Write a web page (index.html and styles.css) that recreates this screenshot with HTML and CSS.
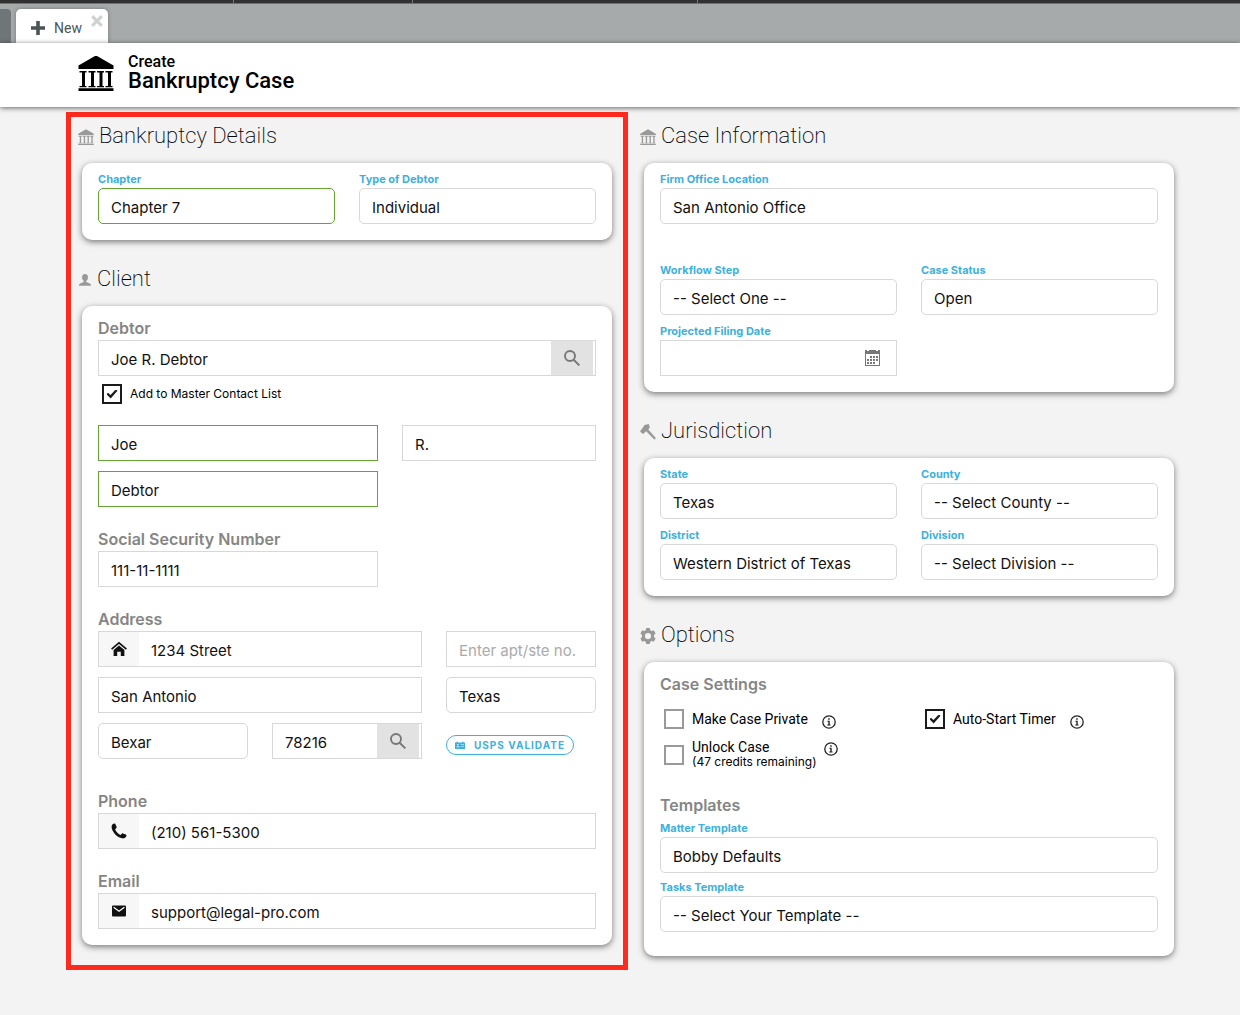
FILE: index.html
```
<!DOCTYPE html>
<html lang="en">
<head>
<meta charset="utf-8">
<meta name="viewport" content="width=device-width, initial-scale=1">
<title>Create Bankruptcy Case</title>
<link rel="stylesheet" href="styles.css">
</head>
<body>
<svg class="sprite" aria-hidden="true">
  <symbol id="i-bank" viewBox="0 0 36 36">
    <path d="M.500 10.500 17 1h2l16.500 9.500V14H.5zM.5 33.200h35V36H.5zM1.500 16h7v1.600H7V31h1.500v1.200h-7V31H4V17.600H1.500zM10.500 16h7v1.600H16V31h1.500v1.200h-7V31H13V17.600h-2.500zM19 16h7v1.600h-1.500V31H26v1.200h-7V31h2.500V17.600H19zM27.500 16h7v1.600H33V31h1.500v1.200h-7V31H30V17.600h-2.500z"/>
  </symbol>
  <symbol id="i-user" viewBox="0 0 16 16">
    <path d="M8 1c2.300 0 3.400 1.600 3.400 3.800 0 1.800-.8 3.400-1.900 4.200v1.300c0 .5 5 1.100 5.500 3.700v.5H1V14c.5-2.600 5.500-3.200 5.500-3.700V9C5.400 8.200 4.600 6.600 4.600 4.800 4.600 2.600 5.700 1 8 1z"/>
  </symbol>
  <symbol id="i-gavel" viewBox="0 0 16 16">
    <path d="M0 7.400 4.600.900 8.800 0l1 3.600-1.500 1.800L15.800 14l-1.300 1.800-8.300-8.600L3 10z"/>
  </symbol>
  <symbol id="i-gear" viewBox="0 0 16 16">
    <path fill-rule="evenodd" d="M6.200 0h3.600l.5 2.200 1.300.8 2.200-.7 1.800 3.200L14 7.100v1.800l1.600 1.600-1.800 3.200-2.200-.7-1.300.8-.5 2.200H6.200l-.5-2.200-1.300-.8-2.200.7-1.800-3.200L2 8.900V7.100L.4 5.500l1.800-3.200 2.200.7 1.300-.8zM8 4.900a3.100 3.100 0 1 0 0 6.200 3.100 3.100 0 0 0 0-6.200z"/>
  </symbol>
  <symbol id="i-search" viewBox="0 0 16 16">
    <path fill="none" stroke="currentColor" stroke-width="1.900" d="M6 1a5 5 0 1 0 0 10A5 5 0 0 0 6 1zm3.600 8.700 5.800 5.700"/>
  </symbol>
  <symbol id="i-home" viewBox="0 0 16 16">
    <path d="M8 4.600 13.400 9v6H9.800v-4.200H6.200V15H2.600V9z"/>
    <path fill="none" stroke="currentColor" stroke-width="1.700" d="M.600 8.100 8 1.900l7.400 6.200"/>
  </symbol>
  <symbol id="i-phone" viewBox="0 0 16 16">
    <path d="M.600 3.200C1 1.600 2.300.5 3.600.6c.5 0 .8.300 1 .8l1 2.500c.2.500 0 .9-.4 1.300L4.100 6.300c.9 2.400 2.900 4.500 5.400 5.700l1.300-1.300c.3-.4.8-.5 1.200-.3l2.800 1.100c.5.200.7.500.7 1-.1 1.500-1.500 2.800-3.200 2.900C6.500 15.300.2 8.300.600 3.200z"/>
  </symbol>
  <symbol id="i-mail" viewBox="0 0 16 16">
    <path d="M2.300 2.500h11.400c.8 0 1.300.5 1.300 1.300v8.400c0 .8-.5 1.300-1.300 1.300H2.300c-.8 0-1.300-.5-1.300-1.300V3.800c0-.8.500-1.300 1.300-1.300z"/>
    <path fill="none" stroke="#fff" stroke-width="1.300" d="M2.600 4.300 8 8.200l5.400-3.900"/>
  </symbol>
  <symbol id="i-info" viewBox="0 0 14 14">
    <circle cx="7" cy="7" r="6.200" fill="none" stroke="currentColor" stroke-width="1.300"/>
    <path d="M6.200 3.200h1.500v1.500H6.200zM5.400 5.800h2.300v3.700h.9v1H5.300v-1h1V6.800h-.9z"/>
  </symbol>
  <symbol id="i-calendar" viewBox="0 0 15 16">
    <path fill-rule="evenodd" d="M0 0h2v1h2V0h7v1h2V0h2v16H0zM1 4v11h13V4z"/>
    <path d="M5 6h2v2H5zM8 6h2v2H8zM11 6h2v2h-2zM2 9h2v2H2zM5 9h2v2H5zM8 9h2v2H8zM11 9h2v2h-2zM2 12h2v2H2zM5 12h2v2H5zM8 12h2v2H8z"/>
  </symbol>
  <symbol id="i-card" viewBox="0 0 10 8">
    <path fill-rule="evenodd" d="M0 1.500h1.500V.8H3v.7h4V.8h1.500v.7H10V8H0zM2.200 3v1.300h1.300V3zM1.500 5.400v.9h3.200v-.9zM6 3.400v.6h3v-.6zM6 5.200v.6h3v-.6z"/>
  </symbol>
  <symbol id="i-plus" viewBox="0 0 14 14">
    <path d="M5.200 0h3.600v5.200H14v3.600H8.800V14H5.200V8.800H0V5.200h5.200z"/>
  </symbol>
  <symbol id="i-close" viewBox="0 0 12 12">
    <path fill="none" stroke="currentColor" stroke-width="3.200" d="m1.200 1.200 9.600 9.600m0-9.600-9.600 9.600"/>
  </symbol>
</svg>

<div class="window-bar"><span></span><span></span><span></span></div>

<nav class="tabs" aria-label="Open tabs">
  <div class="tab-prev"></div>
  <div class="tab">
    <a class="tab-link" href="#new"><svg class="icon-14"><use href="#i-plus"/></svg>New</a>
    <button class="tab-close" type="button" aria-label="Close tab"><svg class="icon-12"><use href="#i-close"/></svg></button>
  </div>
</nav>

<header class="page-head">
  <svg class="icon-36"><use href="#i-bank"/></svg>
  <h1><span class="head-small">Create</span> <span class="head-big">Bankruptcy Case</span></h1>
</header>

<main>
<form class="columns">
  <div class="column highlighted">
    <section>
      <h2><svg class="icon-16"><use href="#i-bank"/></svg>Bankruptcy Details</h2>
      <div class="card grid-2">
        <div class="field">
          <label for="chapter">Chapter</label>
          <select class="control valid" id="chapter"><option>Chapter 7</option></select>
        </div>
        <div class="field">
          <label for="debtor-type">Type of Debtor</label>
          <select class="control" id="debtor-type"><option>Individual</option></select>
        </div>
      </div>
    </section>

    <section>
      <h2><svg class="icon-14"><use href="#i-user"/></svg>Client</h2>
      <div class="card client">
        <div class="group">
          <label class="title" for="debtor">Debtor</label>
          <div class="control combo">
            <input id="debtor" type="text" value="Joe R. Debtor">
            <button class="lookup" type="button" aria-label="Search contacts"><svg class="icon-16"><use href="#i-search"/></svg></button>
          </div>
          <label class="check small"><input type="checkbox" checked>Add to Master Contact List</label>
        </div>
        <div class="group names">
          <input class="control valid" type="text" aria-label="First name" value="Joe">
          <input class="control" type="text" aria-label="Middle name" value="R.">
          <input class="control valid" type="text" aria-label="Last name" value="Debtor">
        </div>
        <div class="group">
          <label class="title" for="ssn">Social Security Number</label>
          <div class="names"><input class="control" id="ssn" type="text" value="111-11-1111"></div>
        </div>
        <div class="group">
          <label class="title" for="street">Address</label>
          <div class="address">
            <div class="control combo wide">
              <span class="addon"><svg class="icon-16"><use href="#i-home"/></svg></span>
              <input id="street" type="text" value="1234 Street">
            </div>
            <input class="control" type="text" aria-label="Apartment or suite" placeholder="Enter apt/ste no.">
            <input class="control wide" type="text" aria-label="City" value="San Antonio">
            <select class="control" aria-label="State"><option>Texas</option></select>
            <select class="control" aria-label="County"><option>Bexar</option></select>
            <div class="control combo">
              <input type="text" aria-label="ZIP code" value="78216">
              <button class="lookup" type="button" aria-label="Look up ZIP code"><svg class="icon-16"><use href="#i-search"/></svg></button>
            </div>
            <button class="usps" type="button"><svg class="icon-10"><use href="#i-card"/></svg>USPS VALIDATE</button>
          </div>
        </div>
        <div class="group phone">
          <label class="title" for="phone">Phone</label>
          <div class="control combo">
            <span class="addon"><svg class="icon-16"><use href="#i-phone"/></svg></span>
            <input id="phone" type="tel" value="(210) 561-5300">
          </div>
        </div>
        <div class="group">
          <label class="title" for="email">Email</label>
          <div class="control combo">
            <span class="addon"><svg class="icon-16"><use href="#i-mail"/></svg></span>
            <input id="email" type="email" value="support@legal-pro.com">
          </div>
        </div>
      </div>
    </section>
  </div>

  <div class="column">
    <section>
      <h2><svg class="icon-16"><use href="#i-bank"/></svg>Case Information</h2>
      <div class="card grid-2">
        <div class="field full office">
          <label for="office">Firm Office Location</label>
          <select class="control" id="office"><option>San Antonio Office</option></select>
        </div>
        <div class="field">
          <label for="workflow">Workflow Step</label>
          <select class="control" id="workflow"><option>-- Select One --</option></select>
        </div>
        <div class="field">
          <label for="status">Case Status</label>
          <select class="control" id="status"><option>Open</option></select>
        </div>
        <div class="field">
          <label for="filing-date">Projected Filing Date</label>
          <div class="control combo date">
            <input id="filing-date" type="text">
            <button class="calendar" type="button" aria-label="Pick a date"><svg class="icon-calendar"><use href="#i-calendar"/></svg></button>
          </div>
        </div>
      </div>
    </section>

    <section>
      <h2><svg class="icon-16"><use href="#i-gavel"/></svg>Jurisdiction</h2>
      <div class="card grid-2">
        <div class="field">
          <label for="state">State</label>
          <select class="control" id="state"><option>Texas</option></select>
        </div>
        <div class="field">
          <label for="county">County</label>
          <select class="control" id="county"><option>-- Select County --</option></select>
        </div>
        <div class="field">
          <label for="district">District</label>
          <select class="control" id="district"><option>Western District of Texas</option></select>
        </div>
        <div class="field">
          <label for="division">Division</label>
          <select class="control" id="division"><option>-- Select Division --</option></select>
        </div>
      </div>
    </section>

    <section>
      <h2><svg class="icon-16"><use href="#i-gear"/></svg>Options</h2>
      <div class="card options">
        <h3 class="title">Case Settings</h3>
        <div class="settings">
          <div class="setting">
            <label class="check"><input type="checkbox">Make Case Private</label>
            <svg class="icon-14 info"><use href="#i-info"/></svg>
          </div>
          <div class="setting">
            <label class="check"><input type="checkbox" checked>Auto-Start Timer</label>
            <svg class="icon-14 info"><use href="#i-info"/></svg>
          </div>
          <div class="setting two-line">
            <label class="check"><input type="checkbox"><span>Unlock Case<small>(47 credits remaining)</small></span></label>
            <svg class="icon-14 info"><use href="#i-info"/></svg>
          </div>
        </div>
        <h3 class="title">Templates</h3>
        <div class="templates">
          <div class="field">
            <label for="matter">Matter Template</label>
            <select class="control" id="matter"><option>Bobby Defaults</option></select>
          </div>
          <div class="field">
            <label for="tasks">Tasks Template</label>
            <select class="control" id="tasks"><option>-- Select Your Template --</option></select>
          </div>
        </div>
      </div>
    </section>
  </div>
</form>
</main>
</body>
</html>
```
FILE: styles.css
```
* { box-sizing: border-box; }

body {
  margin: 0;
  min-height: 100vh;
  background: #f3f3f3;
  color: #000;
  font: 16px/20px Roboto, "Liberation Sans", sans-serif;
}

h1, h2, h3 { margin: 0; font-weight: inherit; }
button { padding: 0; border: 0; background: none; font: inherit; cursor: pointer; }
svg { flex: none; fill: currentColor; }
.sprite { position: absolute; width: 0; height: 0; }

.icon-10 { width: 10px; height: 8px; }
.icon-12 { width: 12px; height: 12px; }
.icon-14 { width: 14px; height: 14px; }
.icon-16 { width: 16px; height: 16px; }
.icon-36 { width: 36px; height: 36px; }
.icon-calendar { width: 15px; height: 16px; }

/* Window and tab bars */
.window-bar {
  display: grid;
  grid-template-columns: 234px 179px 285px;
  height: 4px;
  background: #303030;
  border-bottom: 1px solid #6f7171;
}
.window-bar span { border-right: 1px solid #777; }

.tabs {
  display: flex;
  align-items: flex-end;
  gap: 5px;
  height: 39px;
  background: #a6aaaa;
}
.tab-prev { width: 11px; height: 34px; border-radius: 0 4px 0 0; background: #6f7677; }
.tab {
  display: flex;
  justify-content: space-between;
  width: 92px;
  height: 34px;
  padding: 6px 5px 0 15px;
  border-radius: 5px 5px 0 0;
  background: #fff;
  box-shadow: 0 0 4px rgba(0, 0, 0, .3);
}
.tab-link {
  display: flex;
  align-items: center;
  gap: 9px;
  height: 26px;
  color: #4b5557;
  font-size: 14px;
  text-decoration: none;
}
.tab-close { display: flex; height: 12px; color: #d0d2d2; }

.page-head {
  position: relative;
  display: flex;
  align-items: center;
  gap: 14px;
  height: 64px;
  padding: 0 78px 4px;
  background: #fff;
  box-shadow: 0 1px 5px rgba(0, 0, 0, .6);
}
.page-head h1 { display: flex; flex-direction: column; font-weight: 500; }
.head-small { font-size: 16px; line-height: 16px; }
.head-big { font-size: 22px; line-height: 22px; }

/* Two form columns */
main { padding: 5px 50px 45px 66px; }
.columns {
  display: grid;
  grid-template-columns: minmax(0, 1fr) minmax(0, 1fr);
  align-items: start;
}
.column { padding: 0 16px; }
.highlighted { padding: 0 11px 20px; border: 5px solid #ff2a1e; }

h2 {
  display: flex;
  align-items: center;
  gap: 5px;
  margin: 23px 0 11px -4px;
  font-size: 22px;
  line-height: 32px;
  font-weight: 200;
}
section:first-child h2 { margin-top: 8px; }
.highlighted section:first-child h2 { margin-top: 3px; }
h2 svg { margin-top: 2px; color: #999; }

.card {
  padding: 8px 16px 16px;
  border-radius: 10px;
  background: #fff;
  box-shadow: 0 2px 6px rgba(0, 0, 0, .5);
}
.grid-2 { display: grid; grid-template-columns: minmax(0, 1fr) minmax(0, 1fr); gap: 8px 24px; }
.full { grid-column: 1 / -1; }
.office { margin-bottom: 30px; }

.field label {
  display: block;
  color: #3db1de;
  font: 700 11px/17px Inter, "Liberation Sans", sans-serif;
}
.title {
  display: block;
  color: #858585;
  font: 600 16px/24px Inter, "Liberation Sans", sans-serif;
}

/* Inputs */
.control {
  display: block;
  width: 100%;
  height: 36px;
  margin: 0;
  padding: 3px 12px 0;
  appearance: none;
  border: 1px solid #d8d8d8;
  border-radius: 0;
  background: #fff;
  color: #111;
  font: 15px/20px Inter, "Liberation Sans", sans-serif;
}
select.control { border-radius: 5px; }
.control.valid { border-color: #63a62f; }
.control::placeholder { color: #aaa; opacity: 1; }

.combo { display: flex; padding: 0; }
.combo input {
  flex: 1;
  min-width: 0;
  padding: 3px 12px 0;
  border: 0;
  background: none;
  color: inherit;
  font: inherit;
}
.addon, .lookup { display: flex; align-items: center; justify-content: center; }
.addon { width: 40px; background: #f7f7f7; }
.lookup { width: 42px; margin-right: 2px; background: #e2e2e2; color: #777; }
.calendar { display: flex; align-items: center; padding-right: 16px; color: #777; }

/* Client card */
.client { display: grid; gap: 20px; padding-top: 10px; }
.names { display: grid; grid-template-columns: minmax(0, 280fr) minmax(0, 194fr); gap: 10px 24px; }
.address { display: grid; grid-template-columns: repeat(3, minmax(0, 1fr)); gap: 10px 24px; }
.wide { grid-column: span 2; }
.phone { margin-top: 10px; }
.usps {
  display: flex;
  align-items: center;
  justify-content: center;
  gap: 9px;
  align-self: center;
  width: 128px;
  height: 20px;
  margin-top: 8px;
  border: 1px solid #3db1de;
  border-radius: 10px;
  color: #3db1de;
  font: 700 10px/18px Inter, "Liberation Sans", sans-serif;
  letter-spacing: 1px;
}

/* Tick boxes */
.check { display: flex; align-items: center; gap: 8px; font-size: 14px; line-height: 16px; }
.check.small { margin: 8px 4px 1px; font: 12px/20px Inter, "Liberation Sans", sans-serif; }
.check small { display: block; font: 12px/14px Inter, "Liberation Sans", sans-serif; }
.check input {
  display: grid;
  place-items: center;
  flex: none;
  width: 20px;
  height: 20px;
  margin: 0;
  appearance: none;
  border: 2px solid #999;
  background: #fff;
}
.check input:checked { border-color: #1b1b1f; }
.check input:checked::before {
  content: "";
  width: 11px;
  height: 9px;
  background: #1b1b1f;
  clip-path: polygon(0 52%, 14% 36%, 36% 60%, 84% 0, 100% 14%, 38% 100%);
}

/* Options card */
.options { padding: 10px 16px 24px; }
.settings {
  display: grid;
  grid-template-columns: minmax(0, 1fr) minmax(0, 1fr);
  gap: 10px 24px;
  padding: 13px 0 24px;
}
.setting { display: flex; align-items: center; gap: 14px; padding-left: 4px; }
.setting .info { margin-top: 5px; color: #222; }
.two-line { align-items: flex-start; gap: 7px; }
.two-line .info { margin-top: 3px; }
.two-line input { margin-top: 2px; }
.templates { display: grid; gap: 6px; padding-top: 3px; }
```
